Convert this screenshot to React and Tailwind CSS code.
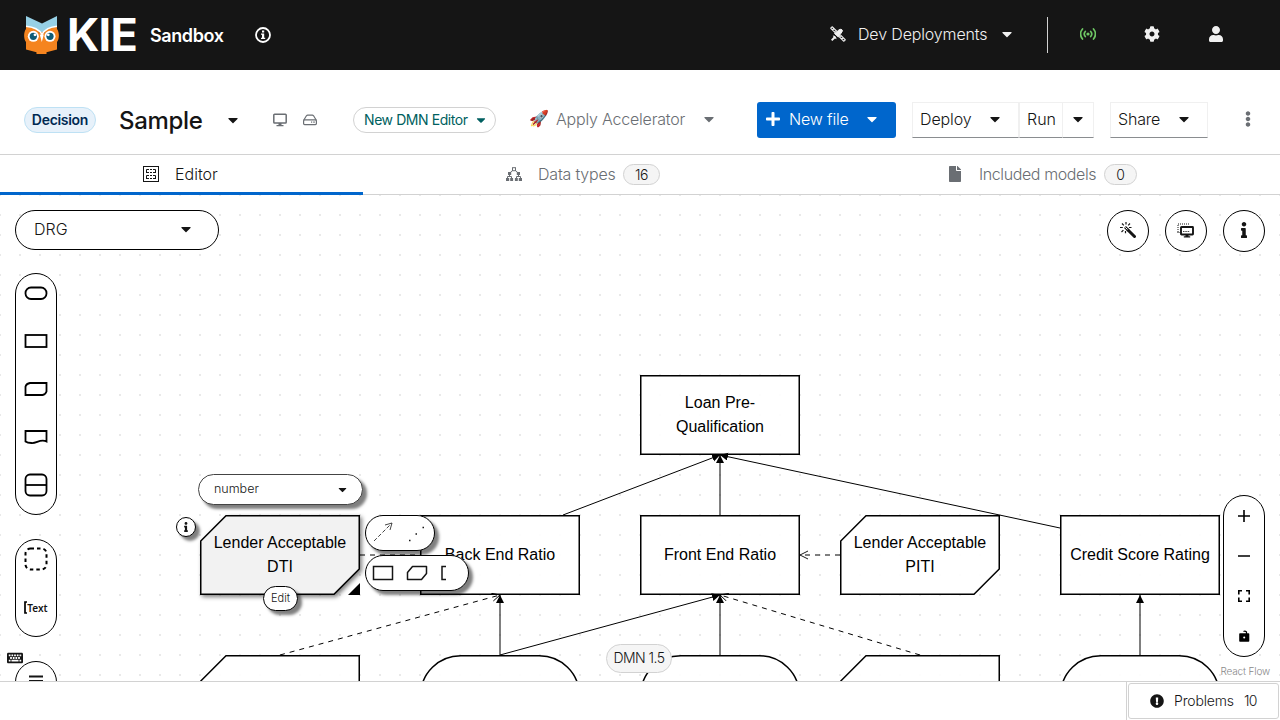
import React from "react";
import {
  FaCaretDown, FaCog, FaUser, FaPlus, FaEllipsisV, FaFile, FaInfo, FaKeyboard, FaExclamationCircle,
} from "react-icons/fa";

const Owl = () => (
  <svg width="36" height="38" viewBox="0 0 36 38" className="shrink-0">
    <path d="M2 13C-.5 16-.5 23 2 26v7.500l10.500 2.700V38h10v-1.800L33 33.500V26c2.500-3 2.500-10 0-13L18 17Z" fill="#f5841f" />
    <path d="M2 0L18 7.500 33 0v12L18 17 2 12Z" fill="#96d0e6" />
    <path d="M2 11c8 .5 13 3 16 8 3-5 7-7.500 15-8v5H2Z" fill="#f5841f" />
    <path d="M2 10.300c8 .7 13 3.200 16 8 3-4.800 7-7.300 15-8" fill="none" stroke="#fff" strokeWidth="1.600" />
    <circle cx="9.300" cy="20.300" r="5.500" fill="#fff" /><circle cx="26" cy="20.300" r="5.500" fill="#fff" />
    <circle cx="9.300" cy="20.300" r="3.600" fill="#0e5c77" /><circle cx="26" cy="20.300" r="3.600" fill="#0e5c77" />
    <circle cx="11" cy="18.800" r="1.400" fill="#fff" /><circle cx="24.300" cy="18.800" r="1.400" fill="#fff" />
    <path d="M15.800 18.500h4L17.800 26Z" fill="#fff" />
  </svg>
);

const InfoOutline = () => (
  <svg width="16" height="16" viewBox="0 0 16 16" className="shrink-0">
    <circle cx="8" cy="8" r="7" fill="none" stroke="#fff" strokeWidth="1.800" />
    <path d="M7 3.500h2.200v2H7ZM6 6.500h3.200v4.300h1V12H6v-1.200h1V7.700H6Z" fill="#fff" />
  </svg>
);

const Satellite = () => (
  <svg width="16" height="16" viewBox="0 0 16 16" className="shrink-0" fill="none" stroke="#f0f0f0">
    <path d="M.8 2.300Q1 1 2.300.8L6.500 5 5 6.500ZM9.500 11L11 9.500l4.200 4.200Q15 15 13.700 15.200ZM2.500 4L4 2.500M11.700 13.200l1.500-1.500" strokeWidth="1.200" />
    <path d="M4.500 7.500L7 6Q8.500 3 11 3.200 13 4 12.300 5.300L10.500 8 8.300 11Z" fill="#f0f0f0" />
    <path d="M2.800 9.500Q6.500 9.500 6.500 13.300L5 12.500 2.300 15 1 13.700 3.500 11Z" fill="#f0f0f0" stroke="none" />
  </svg>
);

const Broadcast = () => (
  <svg width="16" height="12" viewBox="0 0 16 12" fill="none" stroke="#6ec664" strokeWidth="1.700" strokeLinecap="round">
    <circle cx="8" cy="6" r="1.600" fill="#6ec664" stroke="none" />
    <path d="M5.300 3.500a3.800 3.800 0 0 0 0 5M10.700 3.500a3.800 3.800 0 0 1 0 5M2.500 1a7.500 7.500 0 0 0 0 10M13.500 1a7.500 7.500 0 0 1 0 10" />
  </svg>
);

const Wand = () => (
  <svg width="16" height="16" viewBox="0 0 16 16" fill="none" stroke="#151515">
    <path d="M8 8l6.500 6.500" strokeWidth="3" strokeLinecap="round" />
    <path d="M5 5l3.500 3.500" strokeWidth="2.600" /><path d="M5.300 5.300L7.500 7.500" stroke="#fff" strokeWidth="1" />
    <path d="M6 0v2.500M2 1.500l1.800 1.800M10 1.500L8.200 3.300M0 5.500h2.800M9 5.500h2.500M1.500 10l1.900-1.900M5.500 9v2.300" strokeWidth="1.200" />
  </svg>
);

const Screen = () => (
  <svg width="14" height="14" viewBox="0 0 14 14" className="shrink-0">
    <rect x=".8" y="1.300" width="12.400" height="8.800" rx=".8" fill="none" stroke="#6a6e73" strokeWidth="1.500" />
    <path d="M5.500 10h3v2h2v1.200h-7V12h2Z" fill="#6a6e73" />
  </svg>
);

const Drive = () => (
  <svg width="14" height="12" viewBox="0 0 14 12" className="shrink-0" fill="none" stroke="#6a6e73">
    <path d="M.7 6.300L3.400 1.800Q4 1.200 4.600 1.200h4.800q.6 0 1.200.6L13.300 6.300" strokeWidth="1.200" />
    <rect x=".6" y="5.800" width="12.800" height="4.800" rx="1" strokeWidth="1.200" />
    <path d="M8 8.200h1.200M10.200 8.200h1.600" strokeWidth="1.800" strokeOpacity=".7" />
  </svg>
);

const EditorIcon = () => (
  <svg width="16" height="16" viewBox="0 0 16 16" className="shrink-0" fill="none" stroke="#151515">
    <rect x=".5" y=".5" width="15" height="15" />
    <path d="M3.500 7V3.500H6M7 3.500h2M10 3.500h2.500V7M3.500 6.500H6M7 6.500h2M10 6.500h2.500M3.500 13V9.500H6M7 9.500h2M10 9.500h2.500V13M3.500 12.500H6M7 12.500h2M10 12.500h2.500" />
  </svg>
);

const TreeIcon = () => (
  <svg width="16" height="15" viewBox="0 0 16 15" className="shrink-0" fill="none" stroke="#6a6e73">
    <rect x="6.500" y=".7" width="3" height="3" />
    <path d="M6.500 3.500L3.800 6M9.500 3.500L12.200 6M1.500 11V9.500h4V11M10.500 11V9.500h4V11M3.500 7v2.500M12.500 7v2.500" />
    <path d="M2 5h3.200v3H2ZM10.800 5H14v3h-3.200ZM0 11h3.200v3H0ZM4.200 11h2.900v3H4.200ZM8.900 11h2.900v3H8.900ZM12.800 11H16v3h-3.200Z" fill="#6a6e73" stroke="none" />
  </svg>
);

const OverlayIcon = () => (
  <svg width="17" height="15" viewBox="0 0 17 15" className="relative -top-px -left-px">
    <path d="M1 9V1h11" fill="none" stroke="#151515" strokeDasharray="1 1" />
    <path d="M.5 9.500H3" stroke="#151515" strokeDasharray="1 1" />
    <rect x="4" y="4" width="12" height="7.500" rx=".5" fill="#fff" stroke="#151515" strokeWidth="1.900" />
    <path d="M6 8.500h7" stroke="#151515" strokeWidth=".8" strokeDasharray="1.500 .8" />
    <path d="M8.500 12h3v1.200h1.700v1.200H6.800v-1.200h1.700Z" fill="#151515" />
  </svg>
);

const shapes = {
  input: <rect x="1" y="7" width="21" height="11.500" rx="5.500" />,
  decision: <rect x="1" y="6.500" width="21" height="12" />,
  bkm: <path d="M5.500 6.500H22v8.500q-1 3-4 3.500H1V10q1-3 4.500-3.500Z" />,
  source: <path d="M1 6.500h21v10.500c-6-3-10 2-15 1.500Q3 18.500 1 17Z" />,
  service: <><rect x="1" y="2" width="21" height="21" rx="4.500" /><path d="M1 12.500h21" /></>,
  group: <rect x="1" y="2" width="21" height="21" rx="5" strokeDasharray="3.500 3" strokeWidth="2" />,
};
const Shape = ({ name }) => (
  <svg width="24" height="25" viewBox="-.5 .5 24 25" fill="none" stroke="#000" strokeWidth="1.800">{shapes[name]}</svg>
);

const Node = ({ pos, children }) => (
  <div className={`absolute flex h-20 w-40 items-center justify-center px-1 text-center text-[16px] leading-6 text-black font-['Liberation_Sans',Arial,sans-serif] ${pos}`}>
    <span>{children}</span>
  </div>
);

const pill = "rounded-full border border-black bg-white";
const soft = "shadow-[4px_4px_3px_rgba(0,0,0,0.5)]";

function Diagram() {
  const box = { fill: "#fff", fillOpacity: 0.9, stroke: "#000", strokeWidth: 1.5 };
  const knowledge = (x, y) => `M${x + 26} ${y + 0.75}H${x + 159.25}V${y + 54}L${x + 134} ${y + 79.25}H${x + 0.75}V${y + 26}Z`;
  return (
    <svg width="1280" height="486" className="absolute inset-0">
      <defs>
        <pattern id="dots" width="20" height="20" patternUnits="userSpaceOnUse" x="-10" y="-10">
          <rect x="9" y="9" width="2" height="2" fill="#e9e9e9" />
        </pattern>
        <marker id="solid" markerUnits="userSpaceOnUse" markerWidth="10" markerHeight="10" refX="8" refY="4" orient="auto">
          <path d="M0 0L8 4L0 8Z" />
        </marker>
        <marker id="open" markerUnits="userSpaceOnUse" markerWidth="10" markerHeight="10" refX="8" refY="4.500" orient="auto">
          <path d="M0 .5L8 4.500L0 8.500" fill="none" stroke="#000" strokeWidth=".9" />
        </marker>
        <filter id="lift" x="-10%" y="-10%" width="125%" height="125%">
          <feDropShadow dx="2" dy="2" stdDeviation="2" floodOpacity=".5" />
        </filter>
      </defs>
      <rect width="1280" height="486" fill="url(#dots)" />
      <g {...box}>
        <rect x="640.75" y="180.750" width="158.500" height="78.500" />
        <rect x="420.75" y="320.750" width="158.500" height="78.500" />
        <rect x="640.75" y="320.750" width="158.500" height="78.500" />
        <rect x="1060.75" y="320.750" width="158.500" height="78.500" />
        <path d={knowledge(840, 320)} />
        <path d={knowledge(200, 460)} />
        <path d={knowledge(840, 460)} />
        <rect x="420.75" y="460.750" width="158.500" height="78.500" rx="40" />
        <rect x="640.75" y="460.750" width="158.500" height="78.500" rx="40" />
        <rect x="1060.75" y="460.750" width="158.500" height="78.500" rx="40" />
      </g>
      <path d={knowledge(200, 320)} fill="#f2f2f2" stroke="#000" strokeWidth="1.500" filter="url(#lift)" />
      <path d="M360 388v12h-12Z" />
      <g fill="none" stroke="#000">
        <path d="M563 320L720 260" markerEnd="url(#solid)" />
        <path d="M720 320V260" markerEnd="url(#solid)" />
        <path d="M1060 333L720 260" markerEnd="url(#solid)" />
        <path d="M500 460V400" markerEnd="url(#solid)" />
        <path d="M500 460L720 400" markerEnd="url(#solid)" />
        <path d="M720 460V400" markerEnd="url(#solid)" />
        <path d="M1140 460V400" markerEnd="url(#solid)" />
      </g>
      <g fill="none" stroke="#000" strokeDasharray="5 5">
        <path d="M360 360H420" />
        <path d="M840 360H800" markerEnd="url(#open)" />
        <path d="M280 460L500 400" markerEnd="url(#open)" />
        <path d="M920 460L720 400" markerEnd="url(#open)" />
      </g>
    </svg>
  );
}

export default function App() {
  return (
    <div className="flex h-[720px] w-[1280px] flex-col overflow-hidden bg-white text-[16px] leading-6 whitespace-nowrap text-[#151515] font-['Inter','Liberation_Sans',sans-serif]">
      <header className="flex h-[70px] shrink-0 items-center bg-[#151515] pl-6 text-[#f0f0f0]">
        <Owl />
        <div className="ml-[7px] w-[83px] text-[45px] leading-[38px] font-bold tracking-[-0.8px] text-white">KIE</div>
        <div className="w-[105px] pt-px text-[18px] font-semibold tracking-[-0.4px] text-white">Sandbox</div>
        <InfoOutline />
        <div className="ml-[559px] flex h-9 w-[218px] items-center border-r border-[#d2d2d2] pb-0.5">
          <Satellite />
          <span className="ml-3 w-[141px] font-light tracking-[-0.15px]">Dev Deployments</span>
          <FaCaretDown />
        </div>
        <div className="flex w-[80px] justify-center pb-0.5"><Broadcast /></div>
        <div className="flex w-[48px] justify-center pb-0.5"><FaCog /></div>
        <div className="flex w-[80px] justify-center pb-0.5"><FaUser /></div>
      </header>

      <div className="flex h-[85px] shrink-0 items-center border-b border-[#d2d2d2] pt-[15px] pl-6">
        <div className="flex h-[26px] w-[72px] items-center justify-center rounded-full border border-[#bee1f4] bg-[#e7f1fa] text-[14px] font-semibold tracking-[-0.3px] text-[#002952]">Decision</div>
        <div className="ml-[23px] w-[106px] pt-[3px] text-[24px] font-medium tracking-[-0.3px]">Sample</div>
        <FaCaretDown />
        <div className="ml-[32px]"><Screen /></div>
        <div className="ml-4"><Drive /></div>
        <div className="ml-9 flex h-[26px] w-[143px] items-center rounded-full border border-[#d2d2d2] pl-[10px] text-[14px] text-[#005f60]">
          <span className="w-[110px] tracking-[-0.42px]">New DMN Editor</span><FaCaretDown className="size-[14px]" />
        </div>
        <div className="ml-[33px] flex w-[228px] items-center pb-0.5 text-[#6a6e73]">
          <span className="w-[27px] font-['Noto_Color_Emoji',sans-serif]">🚀</span>
          <span className="w-[145px] font-light tracking-[-0.2px]">Apply Accelerator</span>
          <FaCaretDown />
        </div>
        <div className="flex h-9 w-[139px] items-center rounded-[3px] bg-[#06c] pb-0.5 pl-2 text-white">
          <FaPlus /><span className="ml-2 w-[75px] font-light tracking-[-0.15px]">New file</span><FaCaretDown />
        </div>
        <div className="ml-4 flex h-9 w-[107px] items-center border border-[#f0f0f0] border-b-[#8a8d90] pb-px pl-[7px]">
          <span className="w-[67px] font-light tracking-[-0.1px]">Deploy</span><FaCaretDown />
        </div>
        <div className="flex h-9 w-[44px] items-center border border-[#f0f0f0] border-b-[#8a8d90] pb-px pl-[7px] font-light">Run</div>
        <div className="flex h-9 w-[31px] items-center justify-center border border-l-0 border-[#f0f0f0] border-b-[#8a8d90] pb-px"><FaCaretDown /></div>
        <div className="ml-4 flex h-9 w-[98px] items-center border border-[#f0f0f0] border-b-[#8a8d90] pb-px pl-[7px]">
          <span className="w-[58px] font-light tracking-[-0.2px]">Share</span><FaCaretDown />
        </div>
        <FaEllipsisV className="relative -top-px ml-8 text-[#6a6e73]" />
      </div>

      <nav className="flex h-10 shrink-0 border-b border-[#d2d2d2] text-[#6a6e73]">
        <div className="-mb-px flex w-[363px] items-center border-b-[3px] border-[#06c] pl-[143px] font-light text-[#151515]"><EditorIcon /><span className="ml-4">Editor</span></div>
        <div className="flex w-[441px] items-center pl-[143px] font-light">
          <TreeIcon /><span className="relative -top-px ml-4 w-[85px] tracking-[-0.2px]">Data types</span>
          <span className="flex h-[21px] w-[37px] items-center justify-center rounded-full border border-[#d2d2d2] bg-[#f5f5f5] text-[14px] tracking-[-0.5px] text-[#151515]">16</span>
        </div>
        <div className="flex items-center pl-[143px] font-light">
          <FaFile className="relative -top-px" /><span className="relative -top-px ml-4 w-[125px] tracking-[-0.4px]">Included models</span>
          <span className="flex h-[21px] w-[33px] items-center justify-center rounded-full border border-[#d2d2d2] bg-[#f5f5f5] text-[14px] text-[#151515]">0</span>
        </div>
      </nav>

      <main className="relative h-[486px] shrink-0 overflow-hidden">
        <Diagram />
        <Node pos="left-[640px] top-[180px]">Loan Pre-<br />Qualification</Node>
        <Node pos="left-[200px] top-[320px]">Lender Acceptable<br />DTI</Node>
        <Node pos="left-[420px] top-[320px]">Back End Ratio</Node>
        <Node pos="left-[640px] top-[320px]">Front End Ratio</Node>
        <Node pos="left-[840px] top-[320px]">Lender Acceptable<br />PITI</Node>
        <Node pos="left-[1060px] top-[320px]">Credit Score Rating</Node>

        <div className={`absolute top-[279px] left-[198px] flex h-[31px] w-[165px] items-center rounded-full border border-[#444] bg-white pb-px pl-[15px] text-[12.500px] font-light ${soft}`}>
          <span className="w-[122px]">number</span><FaCaretDown className="size-[13px]" />
        </div>
        <div className={`absolute top-[322px] left-[176px] flex size-5 items-center justify-center ${pill} ${soft}`}><FaInfo className="size-[10px]" /></div>
        <div className={`absolute top-[391px] left-[263px] flex h-[25px] w-[35px] items-center justify-center pb-px text-[11px] font-light ${pill} ${soft}`}>Edit</div>
        <div className={`absolute top-[320px] left-[365px] h-9 w-[70px] ${pill} ${soft}`}>
          <svg width="68" height="34" viewBox="0 0 68 34" fill="none" stroke="#151515" strokeWidth="1">
            <path d="M8 25L25 8" strokeDasharray="4 2" strokeWidth=".8" /><path d="M19 9l7-2-2 7" strokeWidth=".8" />
            <path d="M43 24.500h1.500M49.500 18h1.500M56.500 11.500H58" strokeWidth="1.500" />
          </svg>
        </div>
        <div className={`absolute top-[360px] left-[365px] h-9 w-[104px] ${pill} ${soft}`}>
          <svg width="102" height="34" viewBox="0 0 102 34" fill="none" stroke="#151515" strokeWidth="1.500">
            <rect x="7.500" y="10.500" width="19" height="13" />
            <path d="M46.500 10.500H60.500V17.500L55.500 23.500H41.500V16.500Z" strokeLinejoin="round" />
            <path d="M80 10.500H76V23.500H80" />
          </svg>
        </div>

        <div className={`absolute top-[15px] left-[15px] flex h-10 w-[204px] items-center pb-0.5 pl-[18px] font-light ${pill}`}>
          <span className="w-[144px]">DRG</span><FaCaretDown />
        </div>
        <div className="absolute top-[78px] left-[15px] flex flex-col gap-6">
          <div className={`flex h-[242px] w-[42px] flex-col items-center gap-[23px] pt-[7px] ${pill}`}>
            <Shape name="input" /><Shape name="decision" /><Shape name="bkm" /><Shape name="source" /><Shape name="service" />
          </div>
          <div className={`flex h-[98px] w-[42px] flex-col items-center gap-[23px] pt-[7px] ${pill}`}>
            <Shape name="group" />
            <div className="flex h-[25px] items-center text-[10px] font-semibold">
              <svg width="3" height="13" viewBox="0 0 3 13"><path d="M3 1H1V12H3" fill="none" stroke="#000" strokeWidth="1.700" /></svg><span className="font-['Noto_Sans',sans-serif]">Text</span>
            </div>
          </div>
          <div className={`flex h-[98px] w-[42px] justify-center pt-[13px] ${pill}`}>
            <svg width="14" height="14" viewBox="0 0 14 14"><path d="M0 1.500h14M0 6h14M0 10.500h14" stroke="#151515" strokeWidth="2" /></svg>
          </div>
        </div>
        <FaKeyboard className="absolute top-[455px] left-[6.500px] size-4" />

        <div className="absolute top-[15px] right-[15px] flex gap-4">
          <div className={`flex size-[42px] items-center justify-center pb-0.5 ${pill}`}><Wand /></div>
          <div className={`flex size-[42px] items-center justify-center ${pill}`}><OverlayIcon /></div>
          <div className={`flex size-[42px] items-center justify-center pb-0.5 ${pill}`}><FaInfo /></div>
        </div>

        <div className={`absolute top-[300px] right-[15px] flex h-[162px] w-[42px] flex-col ${pill}`}>
          <svg width="40" height="160" viewBox="0 0 40 160" fill="none" stroke="#000" strokeWidth="1.600">
            <path d="M14 20h12M20 14v12M14 60h12" />
            <path d="M14.800 98.500v-3.700H18M22 94.800h3.200v3.700M25.200 101.500v3.700H22M18 105.200h-3.200v-3.700" />
            <path d="M16 138h8.500v7H16Z" fill="#000" strokeLinejoin="round" /><path d="M19.500 135.500q1.500-1 3 .5v2" strokeWidth="1.200" />
            <circle cx="20.200" cy="141.500" r="1" fill="#fff" stroke="none" />
          </svg>
        </div>
        <div className="absolute top-[449px] left-[606px] flex h-[29px] w-[66px] items-center justify-center rounded-full border border-[#d2d2d2] bg-[#f5f5f5] pb-px text-[14px] font-light tracking-[-0.55px]">DMN 1.5</div>
        <div className="absolute top-[470px] right-[10px] text-[10px] leading-3 font-light tracking-[-0.15px] text-[#888]">React Flow</div>
      </main>

      <footer className="flex h-[39px] shrink-0 justify-end border-t border-[#d2d2d2]">
        <div className="flex w-[154px] border-l border-[#d2d2d2] p-px">
          <div className="flex h-9 w-[151px] items-center rounded-[3px] border border-[#d2d2d2] pl-[21px] text-[14px] font-light">
            <FaExclamationCircle className="size-[14px]" /><span className="ml-[10px] w-[70px] tracking-[-0.15px]">Problems</span><span className="tracking-[-0.8px]">10</span>
          </div>
        </div>
      </footer>
    </div>
  );
}
